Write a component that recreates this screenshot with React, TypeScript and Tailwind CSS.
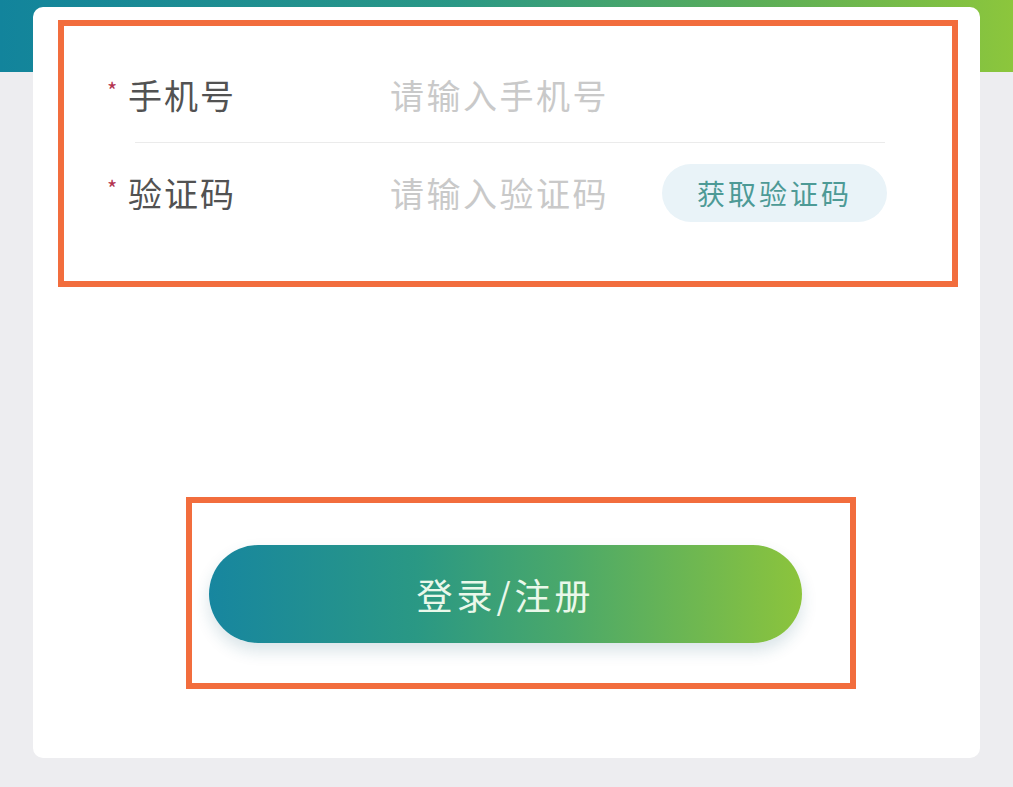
import React from "react";

const font = "font-['Noto_Sans_CJK_SC','Noto_Sans',sans-serif]";

function Field({
  label,
  placeholder,
  action,
  rowClass,
}: {
  label: string;
  placeholder: string;
  action?: React.ReactNode;
  rowClass: string;
}) {
  return (
    <div className={`flex items-center ${rowClass}`}>
      <div className="flex w-[283px] shrink-0 items-center">
        <span className="w-[21px] -translate-y-[6px] text-[22px] leading-none text-[#b3344f]">*</span>
        <span className="text-[34px] leading-none tracking-[2px] text-[#525252]">{label}</span>
      </div>
      <span className="text-[34px] leading-none tracking-[2.5px] text-[#c9c9c9]">{placeholder}</span>
      {action}
    </div>
  );
}

export default function App() {
  return (
    <div
      className={`${font} h-[787px] w-full overflow-hidden bg-[#ededf0] bg-[linear-gradient(90deg,#12849c_0%,#2a9886_45%,#5cae58_75%,#8cc63c_100%)] bg-[length:100%_72px] bg-no-repeat pt-[7px]`}
    >
      <div className="mx-[33px] h-[751px] rounded-[10px] bg-white pt-[13px]">
        {/* Form area */}
        <div className="ml-[25px] w-[900px] border-[6px] border-[#f26d3d] pl-[43px] pt-[22px] pb-[38px]">
          <Field label="手机号" placeholder="请输入手机号" rowClass="h-[94px]" />
          <div className="ml-[28px] mr-[67px] h-px bg-[#ebebeb]" />
          <Field
            label="验证码"
            placeholder="请输入验证码"
            rowClass="h-[100px]"
            action={
              <button className="ml-auto mr-[65px] flex h-[58px] w-[225px] items-center justify-center rounded-full bg-[#e9f3f8] text-[28px] leading-none tracking-[3px] text-[#4d9a96]">
                获取验证码
              </button>
            }
          />
        </div>

        {/* Submit area */}
        <div className="ml-[153px] mt-[210px] w-[670px] border-[6px] border-[#f26d3d] pl-[17px] pt-[42px] pb-[40px]">
          <button className="flex h-[98px] w-[593px] items-center justify-center rounded-full bg-[linear-gradient(90deg,#17869f_0%,#2a9884_35%,#4aa86a_60%,#8cc43c_100%)] text-[36px] leading-none tracking-[4px] text-[#eaf8ea] shadow-[0_8px_16px_rgba(20,90,110,0.16)]">
            登录/注册
          </button>
        </div>
      </div>
    </div>
  );
}
